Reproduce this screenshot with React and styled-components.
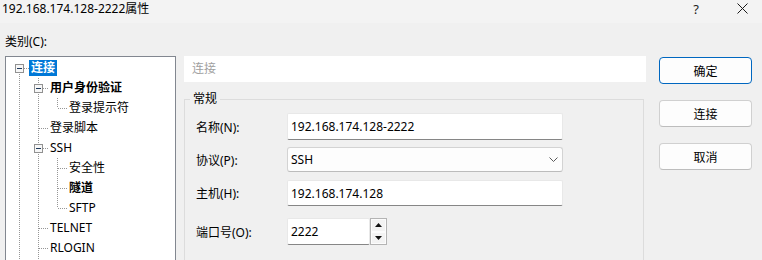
import React from 'react';
import styled, { createGlobalStyle } from 'styled-components';

const GlobalStyles = createGlobalStyle`
  html, body { margin: 0; padding: 0; background: #f0f0f0; }
  body {
    font-family: "Noto Sans", "Noto Sans CJK SC", sans-serif;
    font-size: 12px;
    color: #000;
  }
`;

const Window = styled.div`
  width: 762px;
  height: 260px;
  overflow: hidden;
  background: #f0f0f0;
`;

const TitleBar = styled.div`
  height: 23px;
  background: #f3f3f3;
  display: flex;
  align-items: flex-start;
`;

const TitleText = styled.div`
  flex: 1;
  padding: 1px 0 0 2px;
  line-height: 16px;
  font-size: 12px;
`;

const CaptionButton = styled.div`
  width: 46px;
  height: 23px;
  display: flex;
  justify-content: center;
  padding: 2px 0 0 6px;
  box-sizing: border-box;
  font-size: 13px;
  line-height: 14px;
  color: #1a1a1a;
`;

const Body = styled.div`
  padding-left: 5px;
`;

const CategoryLabel = styled.div`
  margin-top: 12px;
  line-height: 14px;
`;

const MainRow = styled.div`
  margin-top: 7px;
  display: flex;
  align-items: flex-start;
`;

const TreeBox = styled.div`
  width: 171px;
  height: 220px;
  box-sizing: border-box;
  border: 1px solid #828790;
  background: #fff;
  padding: 1px 0 0 4px;
  overflow: hidden;
`;

const TreeRow = styled.div`
  display: flex;
  align-items: center;
  height: 20px;
  white-space: nowrap;
`;

const TreeLabel = styled.span`
  line-height: 16px;
  padding: 0 2px;
  font-weight: ${p => (p.$bold ? 700 : 400)};
  background: ${p => (p.$selected ? '#0078d7' : 'transparent')};
  color: ${p => (p.$selected ? '#fff' : '#000')};
`;

const Middle = styled.div`
  margin-left: 8px;
  width: 462px;
`;

const PageHeader = styled.div`
  height: 26px;
  line-height: 26px;
  background: #fff;
  color: #a0a0a0;
  padding-left: 8px;
`;

const Group = styled.fieldset`
  margin: 10px 2px 0 0;
  padding: 0 0 30px 0;
  border: 1px solid #dcdcdc;
  min-width: 0;
`;

const Legend = styled.legend`
  margin-left: 5px;
  padding: 0 3px;
  line-height: 14px;
`;

const FieldRow = styled.div`
  display: flex;
  align-items: center;
  padding-left: 11px;
  margin-top: ${p => p.$gap}px;
  height: ${p => p.$h}px;
`;

const FieldLabel = styled.div`
  width: 91px;
  flex: none;
`;

const TextBox = styled.div`
  width: ${p => p.$w || 276}px;
  height: 100%;
  box-sizing: border-box;
  background: #fff;
  border: 1px solid #e8e8e8;
  border-bottom-color: #868686;
  border-radius: 2px;
  padding-left: 3px;
  display: flex;
  align-items: center;
`;

const Combo = styled.div`
  width: 276px;
  height: 100%;
  box-sizing: border-box;
  background: #fdfdfd;
  border: 1px solid #d3d3d3;
  border-bottom-color: #bcbcbc;
  border-radius: 3px;
  padding: 0 4px 0 3px;
  display: flex;
  align-items: center;
  justify-content: space-between;
`;

const SpinBox = styled.div`
  width: 17px;
  height: 100%;
  box-sizing: border-box;
  border: 1px solid #b4b4b4;
  display: flex;
  flex-direction: column;
`;

const SpinButton = styled.div`
  flex: 1;
  background: #f3f3f3;
  border: 1px solid #fcfcfc;
  display: flex;
  align-items: center;
  justify-content: center;
`;

const ButtonColumn = styled.div`
  margin: 1px 0 0 13px;
  width: 93px;
  display: flex;
  flex-direction: column;
  gap: 16px;
`;

const Button = styled.div`
  height: 27px;
  box-sizing: border-box;
  border: 1px solid ${p => (p.$primary ? '#0067c0' : '#d0d0d0')};
  border-bottom-color: ${p => (p.$primary ? '#0067c0' : '#bdbdbd')};
  border-radius: 4px;
  background: #fdfdfd;
  display: flex;
  align-items: center;
  justify-content: center;
`;

const DOT = '#969696';

function Guide({ vTop, vBottom, horiz, box }) {
  return (
    <svg width="19" height="20" style={{ flex: 'none', display: 'block' }} shapeRendering="crispEdges">
      {vTop && <line x1="9.5" y1="0" x2="9.5" y2="10" stroke={DOT} strokeDasharray="1 1" />}
      {vBottom && <line x1="9.5" y1="10" x2="9.5" y2="20" stroke={DOT} strokeDasharray="1 1" />}
      {horiz && <line x1="10" y1="10.5" x2="19" y2="10.5" stroke={DOT} strokeDasharray="1 1" />}
      {box && (
        <g>
          <rect x="5.5" y="6.5" width="8" height="8" fill="#f7f7f7" stroke="#919191" />
          <rect x="7" y="10" width="5" height="1" fill="#1e395b" />
        </g>
      )}
    </svg>
  );
}

// the last entry only carries the guide lines on past the visible edge
const tree = [
  { label: '连接', guides: [], box: true, next: true, first: true, selected: true, bold: true },
  { label: '用户身份验证', guides: [1], box: true, next: true, bold: true },
  { label: '登录提示符', guides: [1, 1], next: false },
  { label: '登录脚本', guides: [1], next: true },
  { label: 'SSH', guides: [1], box: true, next: true },
  { label: '安全性', guides: [1, 1], next: true },
  { label: '隧道', guides: [1, 1], next: true, bold: true },
  { label: 'SFTP', guides: [1, 1], next: false },
  { label: 'TELNET', guides: [1], next: true },
  { label: 'RLOGIN', guides: [1], next: true },
  { label: '', guides: [1], next: true },
];

function App() {
  return (
    <Window>
      <GlobalStyles />
      <TitleBar>
        <TitleText>192.168.174.128-2222属性</TitleText>
        <CaptionButton>?</CaptionButton>
        <CaptionButton>
          <svg width="11" height="11" style={{ marginTop: 1 }}>
            <path d="M0.5 0.5 L10.5 10.5 M10.5 0.5 L0.5 10.5" stroke="#1a1a1a" strokeWidth="1" fill="none" />
          </svg>
        </CaptionButton>
      </TitleBar>

      <Body>
        <CategoryLabel>类别(C):</CategoryLabel>
        <MainRow>
          <TreeBox>
            {tree.map((item, n) => (
              <TreeRow key={n}>
                {item.guides.map((g, i) => (
                  <Guide key={i} vTop={!!g} vBottom={!!g} />
                ))}
                <Guide vTop={!item.first} vBottom={item.next} horiz={!!item.label} box={item.box} />
                {item.label && (
                  <TreeLabel $bold={item.bold} $selected={item.selected}>{item.label}</TreeLabel>
                )}
              </TreeRow>
            ))}
          </TreeBox>

          <Middle>
            <PageHeader>连接</PageHeader>
            <Group>
              <Legend>常规</Legend>
              <FieldRow $gap={7} $h={27}>
                <FieldLabel>名称(N):</FieldLabel>
                <TextBox>192.168.174.128-2222</TextBox>
              </FieldRow>
              <FieldRow $gap={7} $h={25}>
                <FieldLabel>协议(P):</FieldLabel>
                <Combo>
                  <span>SSH</span>
                  <svg width="9" height="5">
                    <path d="M0.5 0.5 L4.5 4.5 L8.5 0.5" stroke="#5a5a5a" fill="none" />
                  </svg>
                </Combo>
              </FieldRow>
              <FieldRow $gap={8} $h={26}>
                <FieldLabel>主机(H):</FieldLabel>
                <TextBox>192.168.174.128</TextBox>
              </FieldRow>
              <FieldRow $gap={12} $h={27}>
                <FieldLabel>端口号(O):</FieldLabel>
                <TextBox $w={83}>2222</TextBox>
                <SpinBox>
                  <SpinButton>
                    <svg width="7" height="4"><path d="M3.5 0 L7 4 L0 4 Z" fill="#111" /></svg>
                  </SpinButton>
                  <SpinButton>
                    <svg width="7" height="4"><path d="M0 0 L7 0 L3.5 4 Z" fill="#111" /></svg>
                  </SpinButton>
                </SpinBox>
              </FieldRow>
            </Group>
          </Middle>

          <ButtonColumn>
            <Button $primary>确定</Button>
            <Button>连接</Button>
            <Button>取消</Button>
          </ButtonColumn>
        </MainRow>
      </Body>
    </Window>
  );
}

export default App;
